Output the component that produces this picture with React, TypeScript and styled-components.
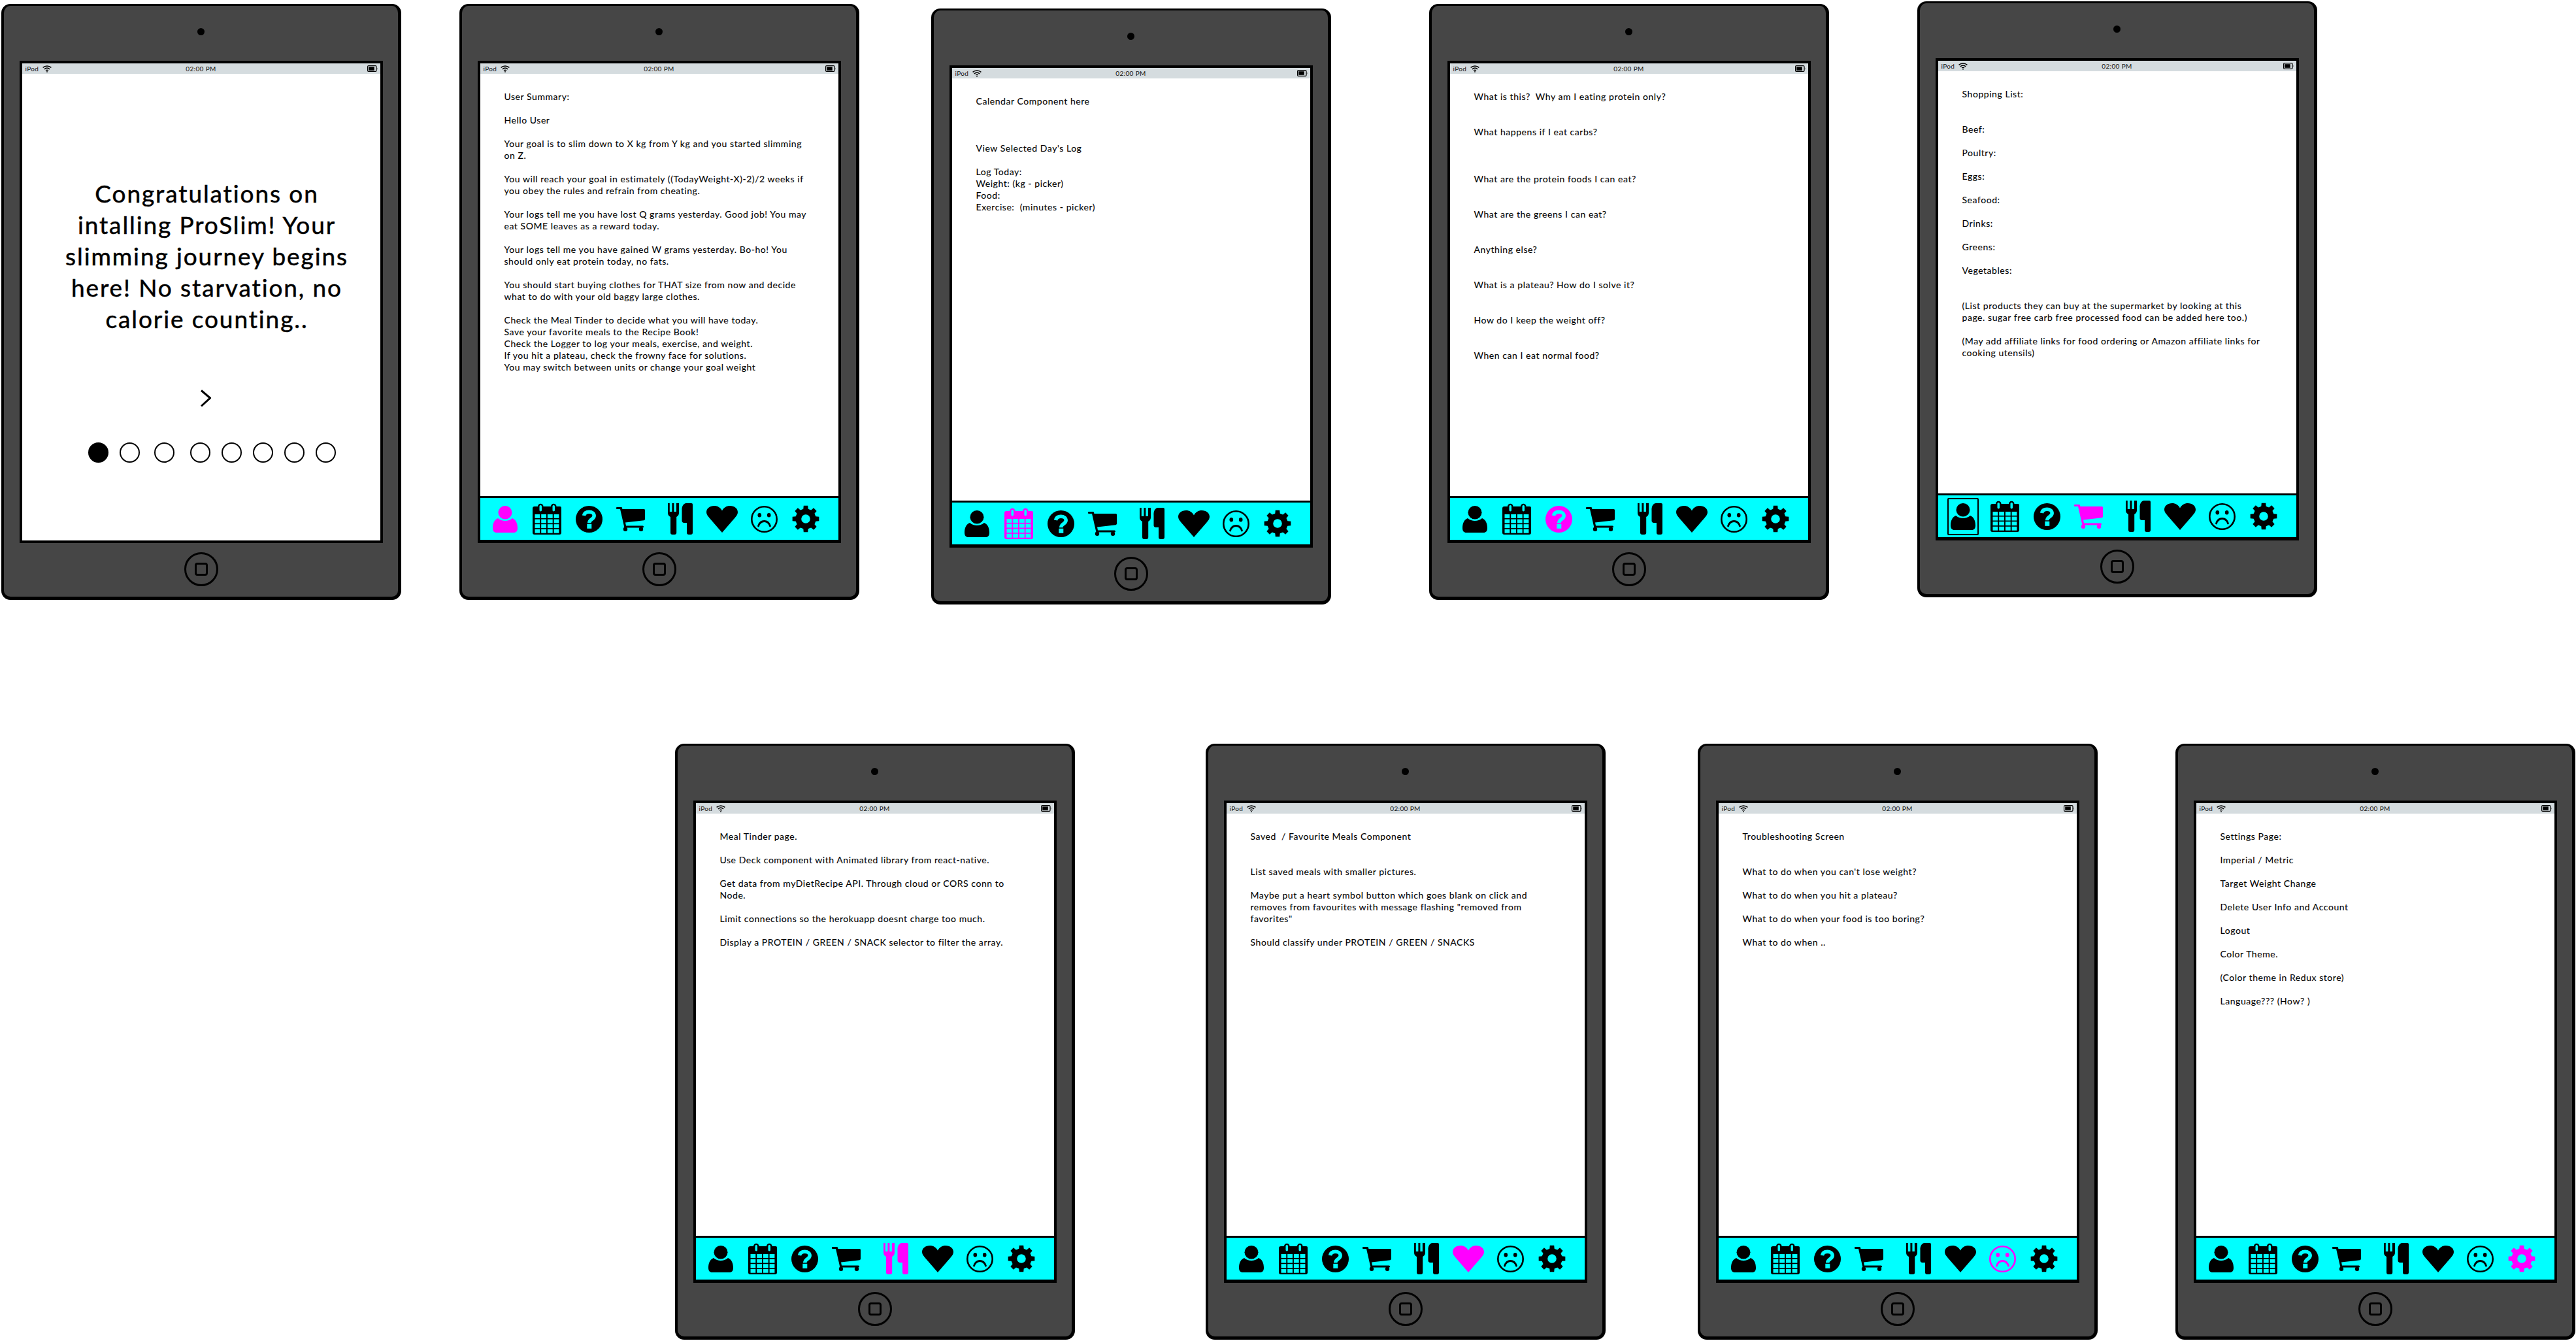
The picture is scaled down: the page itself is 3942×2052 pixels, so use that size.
import React from "react";
import styled, { createGlobalStyle } from "styled-components";

const Global = createGlobalStyle`
  html, body { margin: 0; padding: 0; background: #fff; overflow: hidden; }
`;

const FONT = `"Lato", "Open Sans", sans-serif`;
const CYAN = "#00ffff";
const MAGENTA = "#ff00ff";

const Canvas = styled.main`
  position: relative;
  width: 3942px;
  height: 2052px;
  background: #fff;
  overflow: hidden;
  font-family: ${FONT};
  color: #000;
`;

const Device = styled.section<{ $x: number; $y: number }>`
  position: absolute;
  left: ${(p) => p.$x}px;
  top: ${(p) => p.$y}px;
  box-sizing: border-box;
  width: 612px;
  height: 912px;
  display: flex;
  flex-direction: column;
  align-items: center;
  background: #464646;
  border-style: solid;
  border-color: #000;
  border-width: 3px 5px 5px 4px;
  border-radius: 14px;
`;

const Camera = styled.div`
  width: 11px;
  height: 11px;
  margin-top: 34px;
  border-radius: 50%;
  background: #000;
  flex: none;
`;

const Screen = styled.div`
  box-sizing: border-box;
  width: 556px;
  height: 738px;
  margin-top: 39px;
  flex: none;
  display: flex;
  flex-direction: column;
  background: #fff;
  border: 4px solid #000;
`;

const StatusBar = styled.header`
  position: relative;
  height: 16px;
  flex: none;
  display: flex;
  align-items: center;
  justify-content: space-between;
  padding: 0 4px 0 5px;
  background: #d5dcdf;
  font-size: 10px;
  letter-spacing: 0.35px;
  color: #111;
`;

const Carrier = styled.div`
  display: flex;
  align-items: center;
  gap: 6px;
`;

const Clock = styled.span`
  position: absolute;
  left: 0;
  right: 0;
  text-align: center;
`;

const Body = styled.div`
  flex: 1;
  min-height: 0;
  padding: 26px 0 0 37px;
  font-size: 14px;
  line-height: 18px;
  letter-spacing: 0.55px;
  white-space: pre;
  -webkit-text-stroke: 0.1px #000;
`;

const Welcome = styled.div`
  flex: 1;
  display: flex;
  flex-direction: column;
  align-items: center;
  padding: 159px 0 0 18px;
`;

const Headline = styled.h1`
  margin: 0;
  font-size: 37px;
  line-height: 48px;
  font-weight: 400;
  letter-spacing: 1.9px;
  text-align: center;
  white-space: pre;
  -webkit-text-stroke: 0.5px #000;
`;

const Next = styled.svg`
  display: block;
  margin: 84px 0 0 -3px;
  flex: none;
`;

const Pager = styled.div`
  align-self: flex-start;
  display: flex;
  margin: 54px 0 0 83px;
`;

const Dot = styled.span<{ $on?: boolean; $gap: number }>`
  box-sizing: border-box;
  width: 31px;
  height: 31px;
  margin-left: ${(p) => p.$gap}px;
  border-radius: 50%;
  border: 2px solid #000;
  background: ${(p) => (p.$on ? "#000" : "#fff")};
`;

const TabBar = styled.nav`
  box-sizing: border-box;
  height: 68px;
  flex: none;
  display: flex;
  align-items: center;
  background: ${CYAN};
  border-top: 3px solid #000;
  border-bottom: 1px solid #000;
`;

const Tab = styled.span<{ $gap: number; $on: boolean; $boxed?: boolean }>`
  position: relative;
  display: flex;
  flex: none;
  margin-left: ${(p) => p.$gap}px;
  color: ${(p) => (p.$on ? MAGENTA : "#000")};
  ${(p) =>
    p.$boxed
      ? `&::after {
          content: "";
          position: absolute;
          inset: -8px -5px;
          border: 2px solid #000;
          border-radius: 2px;
        }`
      : ""}
`;

const HomeButton = styled.div`
  box-sizing: border-box;
  width: 52px;
  height: 52px;
  margin-top: 14px;
  flex: none;
  display: flex;
  align-items: center;
  justify-content: center;
  border: 3px solid #000;
  border-radius: 50%;
`;

const HomeSquare = styled.div`
  box-sizing: border-box;
  width: 20px;
  height: 20px;
  border: 3px solid #000;
  border-radius: 4px;
`;

const Wifi = () => (
  <svg width="14" height="11" viewBox="0 0 14 11" fill="none" stroke="#000" strokeWidth="1.5">
    <path d="M.6 3.4C4.2.2 9.8.2 13.4 3.4" />
    <path d="M2.9 5.8c2.4-2 5.8-2 8.2 0" />
    <path d="M5.1 8c1.1-.8 2.7-.8 3.8 0" />
    <circle cx="7" cy="9.8" r=".9" fill="#000" stroke="none" />
  </svg>
);

const Battery = () => (
  <svg width="16" height="10" viewBox="0 0 16 10">
    <rect x=".6" y=".6" width="13.4" height="8.8" rx="1.4" fill="none" stroke="#000" strokeWidth="1.2" />
    <rect x="2.2" y="2.2" width="8.6" height="5.6" fill="#000" />
    <path d="M14.8 3.2c.8.4.8 3.2 0 3.6z" fill="#000" />
  </svg>
);

const PersonIcon = () => (
  <svg width="38" height="41" viewBox="0 0 38 41" fill="currentColor">
    <path d="M8 19C2.5 21 0 27 0 34c0 4.5 2 7 6 7h26c4 0 6-2.500 6-7 0-7-2.500-13-8-15-3 2.800-7 4-11 4s-8-1.200-11-4z" />
    <ellipse cx="19" cy="10.300" rx="10.500" ry="10.300" />
  </svg>
);

const CalendarIcon = () => {
  const xs = [3.5, 13.2, 22.9, 32.6];
  const ys = [17, 24.6, 32.2, 39.8];
  return (
    <svg width="44" height="48" viewBox="0 0 44 48">
      <path
        fill="currentColor"
        d="M4 5h38a2 2 0 0 1 2 2v38a3 3 0 0 1-3 3H3a3 3 0 0 1-3-3V8a3 3 0 0 1 3-3z"
      />
      <rect x="8" y="0.800" width="8.500" height="14" rx="4.200" fill="currentColor" />
      <rect x="28" y="0.800" width="8.500" height="14" rx="4.200" fill="currentColor" />
      <rect x="10.500" y="3" width="3.500" height="9.500" rx="1.700" fill={CYAN} />
      <rect x="30.500" y="3" width="3.500" height="9.500" rx="1.700" fill={CYAN} />
      {ys.map((y) => xs.map((x) => <rect key={`${x}-${y}`} x={x} y={y} width="7.800" height="5.900" fill={CYAN} />))}
    </svg>
  );
};

const QuestionIcon = () => (
  <svg width="41" height="41" viewBox="0 0 41 41">
    <circle cx="20.500" cy="20.500" r="20.500" fill="currentColor" />
    <path
      fill="none"
      stroke={CYAN}
      strokeWidth="5.500"
      d="M12.500 15c.8-3.800 4-5.700 8-5.700 4.300 0 7.700 2.400 7.700 6 0 5.400-7.500 5-7.500 11"
    />
    <rect x="17.300" y="27.800" width="7" height="7" fill={CYAN} />
  </svg>
);

const CartIcon = () => (
  <svg width="44" height="37" viewBox="0 0 44 37" fill="currentColor">
    <path d="M1.200 0h7.300l1 3H42.500a1.500 1.500 0 0 1 1.500 1.500V19l-1.500 1.300L14 23.600 15 28.600H40.500a1.500 1.500 0 0 1 0 3H12.500L6 3H1.200a1.500 1.500 0 0 1 0-3z" />
    <circle cx="14" cy="33.800" r="3.200" />
    <circle cx="38" cy="33.800" r="3.200" />
  </svg>
);

const MealIcon = () => (
  <svg width="38" height="48" viewBox="0 0 38 48" fill="currentColor">
    <path d="M0 0h2.800v13h3.600V0h3v13h3.500V0H17v15c0 3-1.800 5-3.800 6v24a3 3 0 0 1-3 3H7a3 3 0 0 1-3-3V21c-2.300-1-4-3-4-6z" />
    <path d="M28 0h8a2 2 0 0 1 2 2v43a3 3 0 0 1-3 3h-3a3 3 0 0 1-3-3V30h-4a3 3 0 0 1-3.500-3V11C21 5 24 0 28 0z" />
  </svg>
);

const HeartIcon = () => (
  <svg width="48" height="41" viewBox="0 0 48 41" fill="currentColor">
    <path d="M24 41 4.500 18.500C1.500 15.200 0 12.500 0 9.800 0 3.800 5.500 0 12 0c5 0 9.500 2.500 12 7.500C26.500 2.500 31 0 36 0c6.500 0 12 3.800 12 9.800 0 2.700-1.500 5.400-4.500 8.700z" />
  </svg>
);

const FrownIcon = () => (
  <svg width="41" height="41" viewBox="0 0 41 41" fill="none" stroke="currentColor">
    <circle cx="20.500" cy="20.500" r="19.200" strokeWidth="2.600" />
    <ellipse cx="13.300" cy="14.200" rx="2.800" ry="3.200" fill="currentColor" stroke="none" />
    <ellipse cx="27.700" cy="14.200" rx="2.800" ry="3.200" fill="currentColor" stroke="none" />
    <path d="M11.500 31c2-6 5.500-7.500 9-7.500s7 1.500 9 7.500" strokeWidth="2.800" strokeLinecap="round" />
  </svg>
);

function gearPath(): string {
  const pts: string[] = [];
  const teeth = 8;
  const c = 21;
  for (let i = 0; i < teeth; i++) {
    const a = (i * 2 * Math.PI) / teeth - Math.PI / 2;
    const step = (2 * Math.PI) / teeth;
    const spec: [number, number][] = [
      [15.5, -0.5 * step],
      [15.8, -0.3 * step],
      [20.6, -0.2 * step],
      [20.6, 0.2 * step],
      [15.8, 0.3 * step],
    ];
    spec.forEach(([r, d]) => {
      pts.push(`${(c + r * Math.cos(a + d)).toFixed(2)} ${(c + r * Math.sin(a + d)).toFixed(2)}`);
    });
  }
  const hole = "M27.800 21a6.800 6.800 0 1 0-13.600 0 6.800 6.800 0 1 0 13.600 0z";
  return `M${pts.join("L")}Z${hole}`;
}

const GearIcon = () => (
  <svg width="42" height="42" viewBox="0 0 42 42" fill="currentColor">
    <path fillRule="evenodd" d={gearPath()} />
  </svg>
);

const TABS = [
  { id: "user", gap: 19, Icon: PersonIcon },
  { id: "calendar", gap: 23, Icon: CalendarIcon },
  { id: "help", gap: 22, Icon: QuestionIcon },
  { id: "cart", gap: 21, Icon: CartIcon },
  { id: "meal", gap: 35, Icon: MealIcon },
  { id: "heart", gap: 21, Icon: HeartIcon },
  { id: "frown", gap: 20, Icon: FrownIcon },
  { id: "gear", gap: 22, Icon: GearIcon },
];

const DOT_GAPS = [0, 17, 22, 24, 17, 17, 17, 17];

const Bar = ({ active, boxed }: { active: string; boxed?: string }) => (
  <TabBar>
    {TABS.map(({ id, gap, Icon }) => (
      <Tab key={id} $gap={gap} $on={id === active} $boxed={id === boxed}>
        <Icon />
      </Tab>
    ))}
  </TabBar>
);

const Tablet = ({ x, y, children }: { x: number; y: number; children: React.ReactNode }) => (
  <Device $x={x} $y={y}>
    <Camera />
    <Screen>
      <StatusBar>
        <Carrier>
          <span>iPod</span>
          <Wifi />
        </Carrier>
        <Clock>02:00 PM</Clock>
        <Battery />
      </StatusBar>
      {children}
    </Screen>
    <HomeButton>
      <HomeSquare />
    </HomeButton>
  </Device>
);

const PAGES = [
  {
    x: 703, y: 6, active: "user",
    text: `User Summary:

Hello User

Your goal is to slim down to X kg from Y kg and you started slimming
on Z.

You will reach your goal in estimately ((TodayWeight-X)-2)/2 weeks if
you obey the rules and refrain from cheating.

Your logs tell me you have lost Q grams yesterday. Good job! You may
eat SOME leaves as a reward today.

Your logs tell me you have gained W grams yesterday. Bo-ho! You
should only eat protein today, no fats.

You should start buying clothes for THAT size from now and decide
what to do with your old baggy large clothes.

Check the Meal Tinder to decide what you will have today.
Save your favorite meals to the Recipe Book!
Check the Logger to log your meals, exercise, and weight.
If you hit a plateau, check the frowny face for solutions.
You may switch between units or change your goal weight`,
  },
  {
    x: 1425, y: 13, active: "calendar",
    text: `Calendar Component here



View Selected Day's Log

Log Today:
Weight: (kg - picker)
Food:
Exercise:  (minutes - picker)`,
  },
  {
    x: 2187, y: 6, active: "help",
    text: `What is this?  Why am I eating protein only?


What happens if I eat carbs?



What are the protein foods I can eat?


What are the greens I can eat?


Anything else?


What is a plateau? How do I solve it?


How do I keep the weight off?


When can I eat normal food?`,
  },
  {
    x: 2934, y: 2, active: "cart", boxed: "user",
    text: `Shopping List:


Beef:

Poultry:

Eggs:

Seafood:

Drinks:

Greens:

Vegetables:


(List products they can buy at the supermarket by looking at this
page. sugar free carb free processed food can be added here too.)

(May add affiliate links for food ordering or Amazon affiliate links for
cooking utensils)`,
  },
  {
    x: 1033, y: 1138, active: "meal",
    text: `Meal Tinder page.

Use Deck component with Animated library from react-native.

Get data from myDietRecipe API. Through cloud or CORS conn to
Node.

Limit connections so the herokuapp doesnt charge too much.

Display a PROTEIN / GREEN / SNACK selector to filter the array.`,
  },
  {
    x: 1845, y: 1138, active: "heart",
    text: `Saved  / Favourite Meals Component


List saved meals with smaller pictures.

Maybe put a heart symbol button which goes blank on click and
removes from favourites with message flashing "removed from
favorites"

Should classify under PROTEIN / GREEN / SNACKS`,
  },
  {
    x: 2598, y: 1138, active: "frown",
    text: `Troubleshooting Screen


What to do when you can't lose weight?

What to do when you hit a plateau?

What to do when your food is too boring?

What to do when ..`,
  },
  {
    x: 3329, y: 1138, active: "gear",
    text: `Settings Page:

Imperial / Metric

Target Weight Change

Delete User Info and Account

Logout

Color Theme.

(Color theme in Redux store)

Language??? (How? )`,
  },
];

export default function App() {
  return (
    <Canvas>
      <Global />
      <Tablet x={2} y={6}>
        <Welcome>
          <Headline>{`Congratulations on
intalling ProSlim! Your
slimming journey begins
here! No starvation, no
calorie counting..`}</Headline>
          <Next width="16" height="27" viewBox="0 0 16 27" fill="none" stroke="#000" strokeWidth="3">
            <path d="M1 1.500 14.500 13 1 25.500" />
          </Next>
          <Pager>
            {DOT_GAPS.map((gap, i) => (
              <Dot key={i} $gap={gap} $on={i === 0} />
            ))}
          </Pager>
        </Welcome>
      </Tablet>
      {PAGES.map((p) => (
        <Tablet key={p.x} x={p.x} y={p.y}>
          <Body>{p.text}</Body>
          <Bar active={p.active} boxed={p.boxed} />
        </Tablet>
      ))}
    </Canvas>
  );
}
